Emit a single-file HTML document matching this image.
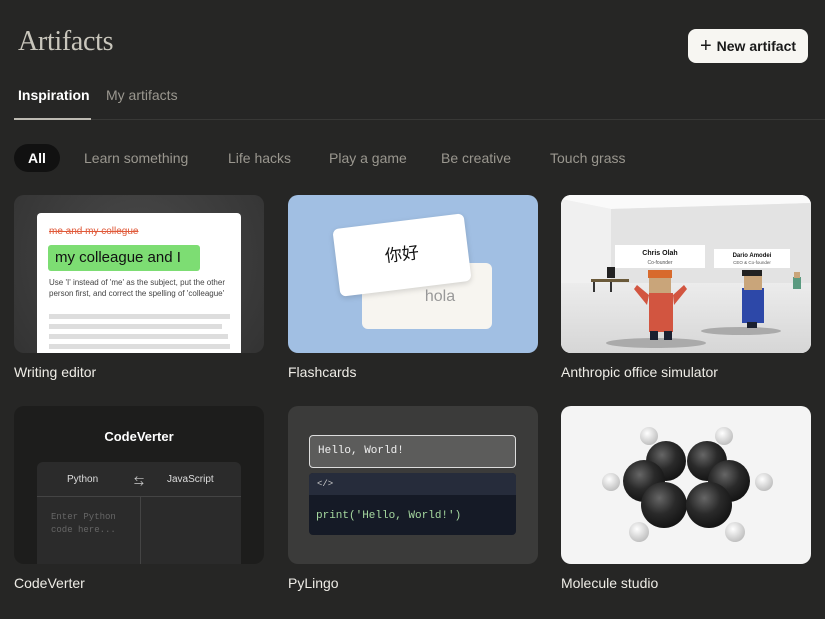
<!DOCTYPE html>
<html><head><meta charset="utf-8"><style>
*{margin:0;padding:0;box-sizing:border-box}
body{width:825px;height:619px;background:#262625;font-family:"Liberation Sans","Noto Sans CJK SC",sans-serif;color:#e8e6e0;position:relative;overflow:hidden}
.abs{position:absolute}
h1{position:absolute;left:18px;top:26px;font-family:"Liberation Serif",serif;font-weight:normal;font-size:28px;color:#c9c6bc;letter-spacing:-0.3px}
.btn{position:absolute;left:688px;top:29px;width:120px;height:34px;background:#f7f6f2;border-radius:8px;color:#1a1a1a;font-size:14px;font-weight:bold;display:flex;align-items:center;justify-content:center;gap:5px}
.tab{position:absolute;top:87px;font-size:14px}
.chip{position:absolute;top:150px;font-size:14px;color:#9a978f}
.card{position:absolute;width:250px;height:158px;border-radius:10px;overflow:hidden}
.lbl{position:absolute;font-size:14px;color:#eeece6}
.mono{font-family:"Liberation Mono",monospace}
</style></head><body>
<h1>Artifacts</h1>
<div class="btn"><span style="font-size:20px;font-weight:normal;line-height:1">+</span>New artifact</div>
<div class="tab" style="left:18px;color:#fff;font-weight:bold">Inspiration</div>
<div class="tab" style="left:106px;color:#9a978f">My artifacts</div>
<div class="abs" style="left:14px;top:119px;width:811px;height:1px;background:#383836"></div>
<div class="abs" style="left:14px;top:118px;width:77px;height:2px;background:#bdbab2"></div>
<div class="abs" style="left:14px;top:144px;width:46px;height:28px;border-radius:14px;background:#111;color:#fff;font-weight:bold;font-size:14px;text-align:center;line-height:28px">All</div>
<div class="chip" style="left:84px">Learn something</div>
<div class="chip" style="left:228px">Life hacks</div>
<div class="chip" style="left:329px">Play a game</div>
<div class="chip" style="left:441px">Be creative</div>
<div class="chip" style="left:550px">Touch grass</div>

<!-- Writing editor -->
<div class="card" style="left:14px;top:195px;background:radial-gradient(circle at 50% 40%,#4a4a4a,#333)">
 <div class="abs" style="left:23px;top:18px;width:204px;height:145px;background:#fff;border-radius:4px">
  <div class="abs" style="left:12px;top:13px;font-size:10px;color:#e05a3a;text-decoration:line-through">me and my collegue</div>
  <div class="abs" style="left:11px;top:32px;width:152px;height:26px;background:#7ddd73;border-radius:3px;font-size:15px;color:#111;line-height:26px;padding-left:7px">my colleague and I</div>
  <div class="abs" style="left:12px;top:64px;width:188px;font-size:8px;line-height:11px;color:#444">Use 'I' instead of 'me' as the subject, put the other person first, and correct the spelling of 'colleague'</div>
  <div class="abs" style="left:12px;top:101px;width:181px;height:5px;background:#ddd"></div>
  <div class="abs" style="left:12px;top:111px;width:173px;height:5px;background:#ddd"></div>
  <div class="abs" style="left:12px;top:121px;width:179px;height:5px;background:#ddd"></div>
  <div class="abs" style="left:12px;top:131px;width:181px;height:5px;background:#ddd"></div>
 </div>
</div>
<div class="lbl" style="left:14px;top:364px">Writing editor</div>

<!-- Flashcards -->
<div class="card" style="left:288px;top:195px;background:#a1bfe3">
 <div class="abs" style="left:74px;top:68px;width:130px;height:66px;background:#f7f5f0;border-radius:6px;font-size:16px;color:#999;text-align:center;line-height:16px;padding-top:26px;padding-left:26px">hola</div>
 <div class="abs" style="left:48px;top:26px;width:132px;height:68px;background:#fff;border-radius:6px;transform:rotate(-7deg);box-shadow:0 2px 6px rgba(0,0,0,.15);font-size:17px;color:#111;text-align:center;line-height:68px">你好</div>
</div>
<div class="lbl" style="left:288px;top:364px">Flashcards</div>

<!-- Office -->
<div class="card" style="left:561px;top:195px;background:#e6e6e6">
<svg width="250" height="158" viewBox="0 0 250 158">
 <defs><linearGradient id="fl" x1="0" y1="0" x2="0" y2="1"><stop offset="0" stop-color="#ececec"/><stop offset="1" stop-color="#d6d6d6"/></linearGradient></defs>
 <rect width="250" height="158" fill="#ececec"/>
 <polygon points="0,0 250,0 250,8 50,14 0,4" fill="#fafafa"/>
 <polygon points="50,14 250,8 250,88 50,92" fill="#e3e3e3"/>
 <polygon points="0,4 50,14 50,92 0,100" fill="#f0f0f0"/>
 <rect x="0" y="88" width="250" height="70" fill="url(#fl)"/>
 <ellipse cx="95" cy="148" rx="50" ry="5" fill="#aaa"/>
 <ellipse cx="180" cy="136" rx="40" ry="4" fill="#aaa"/>
 <rect x="54" y="50" width="90" height="23" fill="#fff"/>
 <text x="99" y="60" font-size="7" font-weight="bold" text-anchor="middle" fill="#111" font-family="Liberation Sans">Chris Olah</text>
 <text x="99" y="69" font-size="5" text-anchor="middle" fill="#555" font-family="Liberation Sans">Co-founder</text>
 <rect x="153" y="54" width="76" height="19" fill="#fff"/>
 <text x="191" y="62" font-size="6" font-weight="bold" text-anchor="middle" fill="#111" font-family="Liberation Sans">Dario Amodei</text>
 <text x="191" y="69" font-size="4.5" text-anchor="middle" fill="#555" font-family="Liberation Sans">CEO &amp; Co-founder</text>
 <rect x="30" y="84" width="38" height="3" fill="#6b5a3a"/><rect x="32" y="87" width="2" height="10" fill="#333"/><rect x="49" y="87" width="2" height="10" fill="#333"/>
 <rect x="46" y="72" width="8" height="11" fill="#222"/>
 <rect x="88" y="98" width="24" height="39" fill="#d25540"/>
 <polygon points="88,100 76,90 73,94 86,110" fill="#d25540"/><polygon points="112,100 123,90 126,94 113,110" fill="#d25540"/>
 <rect x="89" y="136" width="8" height="9" fill="#1a2030"/><rect x="103" y="136" width="8" height="9" fill="#1a2030"/>
 <rect x="88" y="78" width="22" height="20" fill="#c9a57a"/><rect x="87" y="75" width="24" height="8" fill="#d86a2c"/>
 <rect x="181" y="93" width="22" height="35" fill="#2d48a8"/>
 <rect x="186" y="127" width="10" height="6" fill="#1a2030"/>
 <rect x="183" y="78" width="18" height="17" fill="#c9a57a"/><rect x="181" y="75" width="20" height="6" fill="#222"/>
 <rect x="232" y="82" width="8" height="12" fill="#5a9a80"/><rect x="233" y="77" width="6" height="6" fill="#c9a57a"/>
</svg>
</div>
<div class="lbl" style="left:561px;top:364px">Anthropic office simulator</div>

<!-- CodeVerter -->
<div class="card" style="left:14px;top:406px;background:#1d1d1c">
 <div class="abs" style="left:0;top:23px;width:250px;text-align:center;font-size:13px;font-weight:bold;color:#fff">CodeVerter</div>
 <div class="abs" style="left:23px;top:56px;width:204px;height:110px;background:#2b2b2b;border-radius:6px">
  <div class="abs" style="left:30px;top:12px;font-size:10px;color:#ddd">Python</div>
  <div class="abs" style="left:97px;top:11px;font-size:10px;color:#ccc">⇆</div>
  <div class="abs" style="left:130px;top:12px;font-size:10px;color:#ddd">JavaScript</div>
  <div class="abs" style="left:0;top:34px;width:204px;height:1px;background:#444"></div>
  <div class="abs" style="left:103px;top:34px;width:1px;height:80px;background:#444"></div>
  <div class="abs mono" style="left:14px;top:49px;font-size:9px;line-height:13px;color:#666">Enter Python<br>code here...</div>
 </div>
</div>
<div class="lbl" style="left:14px;top:575px">CodeVerter</div>

<!-- PyLingo -->
<div class="card" style="left:288px;top:406px;background:#3b3b3a">
 <div class="abs mono" style="left:21px;top:29px;width:207px;height:33px;border:1.5px solid #ddd;border-radius:4px;background:#5c5c5b;color:#f0f0f0;font-size:11px;line-height:30px;padding-left:8px">Hello, World!</div>
 <div class="abs" style="left:21px;top:67px;width:207px;height:62px;border-radius:4px;overflow:hidden;background:#151a26">
  <div class="mono" style="height:22px;background:#262c3b;color:#ccc;font-size:9px;line-height:22px;padding-left:8px">&lt;/&gt;</div>
  <div class="mono abs" style="left:7px;top:37px;color:#a6d9a0;font-size:11px">print('Hello, World!')</div>
 </div>
</div>
<div class="lbl" style="left:288px;top:575px">PyLingo</div>

<!-- Molecule -->
<div class="card" style="left:561px;top:406px;background:#f4f4f4">
<svg width="250" height="158" viewBox="0 0 250 158">
 <defs>
  <radialGradient id="c" cx="0.4" cy="0.35" r="0.7"><stop offset="0" stop-color="#666"/><stop offset="0.5" stop-color="#2a2a2a"/><stop offset="1" stop-color="#111"/></radialGradient>
  <radialGradient id="h" cx="0.4" cy="0.35" r="0.7"><stop offset="0" stop-color="#fff"/><stop offset="1" stop-color="#bbb"/></radialGradient>
 </defs>
 <circle cx="88" cy="30" r="9" fill="url(#h)"/><circle cx="163" cy="30" r="9" fill="url(#h)"/>
 <circle cx="50" cy="76" r="9" fill="url(#h)"/><circle cx="203" cy="76" r="9" fill="url(#h)"/>
 <circle cx="78" cy="126" r="10" fill="url(#h)"/><circle cx="174" cy="126" r="10" fill="url(#h)"/>
 <circle cx="105" cy="55" r="20" fill="url(#c)"/><circle cx="146" cy="55" r="20" fill="url(#c)"/>
 <circle cx="83" cy="75" r="21" fill="url(#c)"/><circle cx="168" cy="75" r="21" fill="url(#c)"/>
 <circle cx="103" cy="99" r="23" fill="url(#c)"/><circle cx="148" cy="99" r="23" fill="url(#c)"/>
</svg>
</div>
<div class="lbl" style="left:561px;top:575px">Molecule studio</div>
</body></html>
